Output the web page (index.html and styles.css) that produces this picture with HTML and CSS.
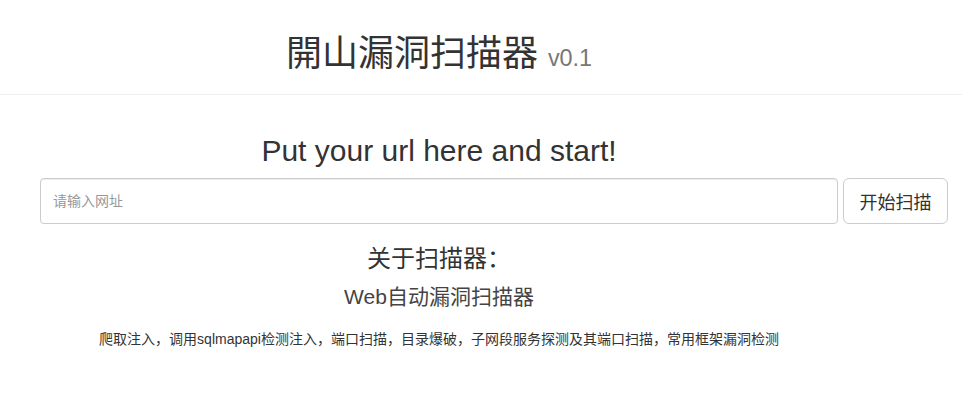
FILE: index.html
```html
<!DOCTYPE html>
<html lang="zh-CN">
<head>
<meta charset="utf-8">
<title>開山漏洞扫描器</title>
<link rel="stylesheet" href="styles.css">
</head>
<body>
<header class="site-header">
  <div class="center-col">
    <h1 class="site-title">開山漏洞扫描器 <small class="version">v0.1</small></h1>
  </div>
</header>
<main class="main">
  <div class="center-col">
    <h2 class="lead-title">Put your url here and start!</h2>
  </div>
  <form class="scan-form">
    <input class="url-input" type="text" placeholder="请输入网址">
    <button class="scan-btn" type="button">开始扫描</button>
  </form>
  <div class="center-col">
    <h3 class="about-title">关于扫描器：</h3>
    <p class="about-sub">Web自动漏洞扫描器</p>
    <p class="about-desc">爬取注入，调用sqlmapapi检测注入，端口扫描，目录爆破，子网段服务探测及其端口扫描，常用框架漏洞检测</p>
  </div>
</main>
</body>
</html>
```
FILE: styles.css
```css
* { box-sizing: border-box; }
html, body {
  margin: 0;
  padding: 0;
  background: #fff;
}
body {
  font-family: "Liberation Sans", Arial, "Noto Sans CJK SC", sans-serif;
  color: #333;
  font-size: 14px;
  line-height: 1.42857;
}
.center-col {
  width: 878px;
  text-align: center;
}
.site-header {
  border-bottom: 1px solid #eee;
  padding: 30px 0 12px;
}
.site-title {
  margin: 0;
  font-size: 36px;
  font-weight: 400;
  line-height: 48px;
  color: #333;
}
.version {
  font-size: 23.4px;
  color: #777;
  font-weight: 400;
}
.main {
  padding-top: 36px;
}
.lead-title {
  margin: 0 0 7px;
  font-size: 30px;
  font-weight: 400;
  line-height: 40px;
  color: #333;
}
.scan-form {
  display: flex;
  gap: 5px;
  margin: 0 14px 0 40px;
}
.url-input {
  flex: 1;
  height: 46px;
  border: 1px solid #ccc;
  border-radius: 4px;
  padding: 0 12px;
  font-family: "Liberation Sans", "Noto Sans CJK SC", sans-serif;
  font-size: 14px;
  color: #555;
  box-shadow: inset 0 1px 1px rgba(0,0,0,.075);
  outline: none;
}
.url-input::placeholder { color: #999; }
.scan-btn {
  width: 105px;
  height: 46px;
  border: 1px solid #ccc;
  border-radius: 6px;
  background: #fff;
  color: #333;
  font-family: "Liberation Sans", "Noto Sans CJK SC", sans-serif;
  font-size: 18px;
  padding: 0;
}
.about-title {
  margin: 19px 0 0;
  font-size: 24px;
  font-weight: 400;
  line-height: 32px;
  color: #333;
}
.about-sub {
  margin: 7px 0 0;
  font-size: 21px;
  line-height: 30px;
  color: #444;
}
.about-desc {
  margin: 17px 0 0;
  font-size: 14px;
  line-height: 20px;
  color: #333;
}
```
